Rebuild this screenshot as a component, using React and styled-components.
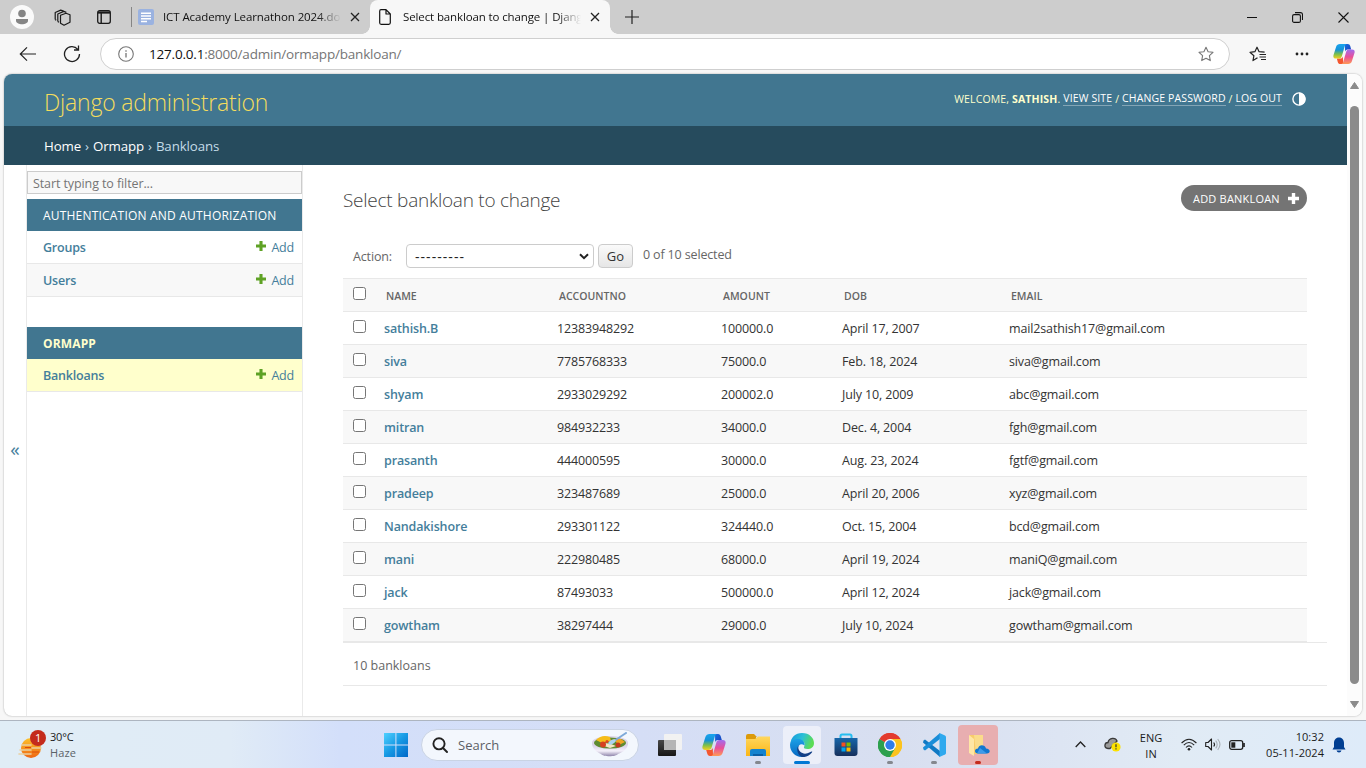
import React from "react";
import styled, { createGlobalStyle, css } from "styled-components";

const GlobalStyle = createGlobalStyle`
  * { box-sizing: border-box; }
  html, body { margin: 0; padding: 0; overflow: hidden; }
  body {
    width: 1366px;
    height: 768px;
    background: #f7f7f7;
    font-family: "Open Sans", "Noto Sans", sans-serif;
    font-size: 12.5px;
    color: #333;
    white-space: nowrap;
  }
  svg { display: block; flex: none; }
`;

const Screen = styled.div`
  width: 1366px;
  height: 768px;
  display: flex;
  flex-direction: column;
`;

/* ---------- browser chrome ---------- */
const TabStrip = styled.div`
  height: 34px;
  flex: none;
  display: flex;
  align-items: center;
  background: #cdcdcd;
  color: #111;
`;
const Avatar = styled.div`
  width: 24px;
  height: 24px;
  margin-left: 10px;
  border-radius: 50%;
  background: #fafafa;
`;
const StripIcon = styled.div`
  margin-left: ${(p) => p.$gap}px;
`;
const StripDivider = styled.div`
  width: 1px;
  height: 20px;
  margin-left: 20px;
  background: #858585;
`;
const Tab = styled.div`
  position: relative;
  display: flex;
  align-items: center;
  height: 34px;
  width: ${(p) => p.$width}px;
  padding-left: ${(p) => p.$pad}px;
  ${(p) =>
    p.$active &&
    css`
      background: #f7f7f7;
      border-radius: 8px 8px 0 0;
      &::before,
      &::after {
        content: "";
        position: absolute;
        bottom: 0;
        width: 8px;
        height: 8px;
      }
      &::before {
        left: -8px;
        background: radial-gradient(circle at 0 0, #cdcdcd 7.5px, #f7f7f7 8px);
      }
      &::after {
        right: -8px;
        background: radial-gradient(circle at 100% 0, #cdcdcd 7.5px, #f7f7f7 8px);
      }
    `}
`;
const TabTitle = styled.div`
  width: ${(p) => p.$width}px;
  margin: 0 9px 0 ${(p) => p.$gap}px;
  overflow: hidden;
  font-size: 11.5px;
  letter-spacing: ${(p) => p.$ls}px;
  line-height: 18px;
  mask-image: linear-gradient(90deg, #000 calc(100% - 24px), transparent);
`;
const WindowButtons = styled.div`
  margin-left: auto;
  margin-right: 17px;
  display: flex;
  align-items: center;
  gap: 35px;
`;
const Toolbar = styled.div`
  height: 40px;
  flex: none;
  display: flex;
  align-items: center;
  padding-left: 19px;
`;
const AddressBar = styled.div`
  width: 1130px;
  height: 32px;
  margin-left: 19px;
  padding: 0 15px 0 17px;
  display: flex;
  align-items: center;
  background: #fff;
  border: 1px solid #cfcfcf;
  border-radius: 16px;
`;
const Url = styled.div`
  flex: 1;
  margin-left: 15px;
  font-size: 13.5px;
  letter-spacing: -0.2px;
  color: #757575;
  span { color: #111; }
`;
const ToolbarActions = styled.div`
  display: flex;
  align-items: center;
  margin-left: 19px;
  gap: 28px;
`;

/* ---------- page ---------- */
const PageFrame = styled.div`
  width: 1358px;
  height: 642px;
  flex: none;
  margin: 0 4px 4px;
  display: flex;
  background: #fff;
  border-radius: 8px;
  overflow: hidden;
  box-shadow: 0 0 2px rgba(0, 0, 0, 0.35);
`;
const Site = styled.div`
  width: 1343px;
  display: flex;
  flex-direction: column;
`;
const Scrollbar = styled.div`
  width: 15px;
  display: flex;
  flex-direction: column;
  align-items: center;
  justify-content: space-between;
  padding: 8px 0 8px;
  background: #fcfcfc;
`;
const Thumb = styled.div`
  width: 9px;
  height: 578px;
  border-radius: 5px;
  background: #8b8b8b;
`;
const Header = styled.header`
  height: 52px;
  flex: none;
  display: flex;
  align-items: center;
  justify-content: space-between;
  padding: 3px 41px 0 40px;
  background: #417690;
`;
const Branding = styled.h1`
  margin: 0;
  font-size: 23px;
  font-weight: 300;
  letter-spacing: -0.2px;
  color: #f5dd5d;
`;
const UserTools = styled.div`
  display: flex;
  align-items: center;
  height: 18px;
  margin-top: -6px;
  font-size: 10.5px;
  letter-spacing: 0.14px;
  line-height: 14px;
  color: #ffc;
  white-space: pre;
  b { font-weight: 700; }
  a { color: #fff; border-bottom: 1px solid rgba(255, 255, 255, 0.35); }
  svg { margin-left: 10px; }
`;
const Breadcrumbs = styled.nav`
  height: 39px;
  flex: none;
  display: flex;
  align-items: center;
  gap: 4px;
  padding-left: 40px;
  background: #264b5d;
  color: #c4dce8;
  font-size: 13.3px;
  letter-spacing: -0.12px;
  a { color: #fff; font-weight: 500; }
`;
const Main = styled.div`
  flex: 1;
  min-height: 0;
  display: flex;
`;
const SidebarToggle = styled.div`
  width: 23px;
  border-right: 1px solid #eaeaea;
  padding-top: 271px;
  text-align: center;
  font-size: 19px;
  line-height: 26px;
  color: #447e9b;
`;
const Sidebar = styled.aside`
  width: 276px;
  border-right: 1px solid #eaeaea;
  padding-top: 6px;
`;
const FilterInput = styled.input`
  display: block;
  width: 275px;
  height: 23px;
  margin: 0 0 5px;
  padding: 1px 5px 0;
  border: 1px solid #ccc;
  background: #f8f8f8;
  font: inherit;
  font-size: 12.5px;
  letter-spacing: -0.1px;
  &::placeholder { color: #757575; }
`;
const Module = styled.section`
  margin-bottom: 30px;
`;
const ModuleCaption = styled.h2`
  height: 32px;
  margin: 0;
  padding-left: 16px;
  display: flex;
  align-items: center;
  background: #417690;
  color: ${(p) => (p.$current ? "#ffc" : "#fff")};
  font-size: 12px;
  font-weight: ${(p) => (p.$current ? 700 : 500)};
  letter-spacing: ${(p) => (p.$current ? 0.15 : 0.2)}px;
`;
const ModelRow = styled.div`
  height: 33px;
  display: flex;
  align-items: center;
  padding: 0 8px 0 16px;
  border-bottom: 1px solid #e8e8e8;
  background: ${(p) => (p.$current ? "#ffc" : p.$shade ? "#f8f8f8" : "#fff")};
  color: #447e9b;
  letter-spacing: -0.2px;
  b { flex: 1; font-weight: 600; }
  svg { margin: -3px 5px 0 0; }
`;

const Content = styled.main`
  flex: 1;
  padding: 20px 20px 0 40px;
`;
const TitleRow = styled.div`
  height: 30px;
  display: flex;
  justify-content: space-between;
  margin-right: 20px;
`;
const Title = styled.h1`
  margin: 0;
  font-size: 19px;
  font-weight: 300;
  line-height: 30px;
  letter-spacing: -0.25px;
  color: #444;
`;
const AddButton = styled.a`
  width: 126px;
  height: 26px;
  padding: 0 8px 0 12px;
  display: flex;
  align-items: center;
  justify-content: space-between;
  border-radius: 13px;
  background: #747474;
  color: #fff;
  font-size: 11px;
  font-weight: 500;
  letter-spacing: 0.2px;
`;
const Actions = styled.div`
  height: 63px;
  display: flex;
  align-items: center;
  padding: 19px 0 0 10px;
  color: #666;
  letter-spacing: -0.15px;
  label { width: 53px; }
`;
const SelectBox = styled.div`
  width: 188px;
  height: 24px;
  padding: 0 4px 0 8px;
  display: flex;
  align-items: center;
  justify-content: space-between;
  border: 1px solid #ccc;
  border-radius: 4px;
  color: #222;
  font-size: 14px;
  letter-spacing: 1.05px;
`;
const GoButton = styled.button`
  width: 35px;
  height: 24px;
  margin: 0 10px 0 4px;
  padding: 0;
  border: 1px solid #ccc;
  border-radius: 4px;
  background: linear-gradient(#fafafa, #e6e6e6);
  color: #333;
  font: inherit;
  font-size: 13px;
`;
const Counter = styled.span`
  margin-top: -4px;
`;
const ResultTable = styled.table`
  width: 964px;
  table-layout: fixed;
  border-collapse: separate;
  border-spacing: 0;
  border-top: 1px solid #e8e8e8;
`;
const Th = styled.th`
  height: 33px;
  padding: 1px 0 0 ${(p) => (p.$check ? 10 : 2)}px;
  background: #f8f8f8;
  border-bottom: 1px solid #e8e8e8;
  text-align: left;
  font-size: 10.5px;
  font-weight: 600;
  letter-spacing: 0;
  color: #666;
`;
const Tr = styled.tr`
  background: ${(p) => (p.$shade ? "#f8f8f8" : "#fff")};
`;
const Td = styled.td`
  height: 33px;
  padding: 1px 0 0 ${(p) => (p.$check ? 10 : 0)}px;
  border-bottom: 1px solid #e8e8e8;
  letter-spacing: ${(p) => p.$ls ?? -0.14}px;
  ${(p) => p.$link && css`color: #447e9b; font-weight: 600;`}
`;
const Check = styled.input.attrs({ type: "checkbox" })`
  display: block;
  width: 13px;
  height: 13px;
  margin: -4px 0 0;
`;
const Paginator = styled.div`
  height: 44px;
  padding: 2px 0 0 10px;
  display: flex;
  align-items: center;
  border-top: 1px solid #e8e8e8;
  border-bottom: 1px solid #e8e8e8;
  color: #666;
`;

/* ---------- taskbar ---------- */
const Taskbar = styled.footer`
  height: 48px;
  flex: none;
  display: flex;
  align-items: center;
  border-top: 1px solid #adb5c0;
  background: linear-gradient(90deg, #e0edf6 0, #e0ebf6 230px, #d3dffa 340px, #d5def6 640px, #d8dff0 900px, #dde5f3 1060px, #e1ebf5 1180px, #deebf9 1366px);
  color: #1b1b1b;
`;
const Weather = styled.div`
  width: 363px;
  padding-left: 18px;
  display: flex;
  align-items: center;
  font-size: 11px;
  line-height: 16px;
  letter-spacing: -0.2px;
`;
const WeatherText = styled.div`
  margin-left: 4px;
  div + div { color: #5b6268; letter-spacing: 0.15px; }
`;
const SearchBox = styled.div`
  width: 218px;
  height: 32px;
  margin: 0 12px 0 13px;
  padding: 0 9px 0 10px;
  display: flex;
  align-items: center;
  border-radius: 16px;
  border: 1px solid #c9d3e4;
  background: #f3f7fd;
  font-size: 13px;
  color: #5c5f66;
  span { flex: 1; margin-left: 10px; }
`;
const AppSlot = styled.div`
  position: relative;
  width: ${(p) => (p.$tone === "alert" ? 40 : 38)}px;
  height: ${(p) => (p.$tone === "alert" ? 40 : 38)}px;
  margin-right: ${(p) => (p.$tone === "alert" ? 0 : p.$gap ?? 6)}px;
  display: flex;
  align-items: center;
  justify-content: center;
  border-radius: 4px;
  background: ${(p) => (p.$tone === "active" ? "#eceff9" : p.$tone === "alert" ? "#e8aeb0" : "transparent")};
  &::after {
    content: "";
    position: absolute;
    bottom: ${(p) => (p.$tone === "alert" ? 1 : 0)}px;
    width: ${(p) => (p.$tone === "active" ? 16 : 6)}px;
    height: 3px;
    border-radius: 2px;
    background: ${(p) => (p.$tone === "active" ? "#0078d4" : p.$tone === "alert" ? "#c42b1c" : p.$tone === "open" ? "#84878e" : "transparent")};
  }
`;
const Tray = styled.div`
  margin-left: auto;
  margin-right: 20px;
  display: flex;
  align-items: center;
  font-size: 11px;
  line-height: 16px;
`;
const Language = styled.div`
  width: 30px;
  margin: 3px 15px 0 15px;
  text-align: center;
`;
const Clock = styled.div`
  width: 66px;
  margin: 0 8px 0 13px;
  text-align: right;
  letter-spacing: ${(p) => p.$ls ?? 0.05}px;
`;
const TraySpacer = styled.div`
  width: ${(p) => p.$w}px;
`;

/* ---------- icons ---------- */
const Svg = ({ w = 16, h = w, box, children, ...rest }) => (
  <svg width={w} height={h} viewBox={box || `0 0 ${w} ${h}`} fill="none" {...rest}>
    {children}
  </svg>
);
const Close = () => (
  <Svg w={10} stroke="#222" strokeWidth="1.3"><path d="M1 1l8 8M9 1l-8 8" /></Svg>
);
const Plus = ({ size, color }) => (
  <Svg w={size} box="0 0 11 11" fill={color}><path d="M3.8 0h3.4v3.8H11v3.4H7.2V11H3.8V7.2H0V3.8h3.8z" fill={color} /></Svg>
);
const Star = (
  "M8 1.2l2.1 4.5 4.9.6-3.6 3.4.9 4.9L8 12.2l-4.3 2.4.9-4.9L1 6.3l4.9-.6z"
);
const Copilot = ({ size, id }) => (
  <Svg w={size} box="0 0 24 24">
    <defs>
      <linearGradient id={`${id}a`} x1="0" y1="0" x2="0" y2="1">
        <stop offset="0" stopColor="#1aa4ee" /><stop offset=".4" stopColor="#1593d8" /><stop offset=".7" stopColor="#7cbf4a" /><stop offset="1" stopColor="#f5d020" />
      </linearGradient>
      <linearGradient id={`${id}b`} x1="0" y1="0" x2="0" y2="1">
        <stop offset="0" stopColor="#a06cf0" /><stop offset=".5" stopColor="#e84f9a" /><stop offset="1" stopColor="#ff9a55" />
      </linearGradient>
      <linearGradient id={`${id}c`} x1="0" y1="0" x2="1" y2="1">
        <stop offset="0" stopColor="#1b6fe0" /><stop offset="1" stopColor="#153fbd" />
      </linearGradient>
    </defs>
    <path d="M13 1h3c1.6 0 2.3.9 2.8 2.4L19.800 7H16c-1.500 0-2.300.8-2.800 2.300z" fill={`url(#${id}c)`} />
    <path d="M11 23H8c-1.600 0-2.300-.9-2.800-2.400L4.200 17H8c1.500 0 2.300-.8 2.800-2.300z" fill="#f4572f" />
    <path d="M7.500 1H15c-1.200 0-1.800 1-2.300 2.700L9.800 14c-.6 2.200-1.500 3-3.300 3H3.200C.8 17-.1 15.500.6 13L3.400 4C4.100 1.900 5.500 1 7.500 1z" fill={`url(#${id}a)`} />
    <path d="M16.500 23H9c1.200 0 1.800-1 2.300-2.700L14.200 10c.6-2.200 1.500-3 3.300-3h3.300c2.400 0 3.300 1.500 2.600 4l-2.800 9c-.7 2.100-2.100 3-4.100 3z" fill={`url(#${id}b)`} />
  </Svg>
);

const WeatherIcon = () => (
  <Svg w={28} h={30}>
    <defs><linearGradient id="sun" x1="0" y1="0" x2="0" y2="1"><stop offset="0" stopColor="#fdc22b" /><stop offset="1" stopColor="#ee6612" /></linearGradient></defs>
    <circle cx="13" cy="18" r="10" fill="url(#sun)" />
    <path d="M4 15h9M14 18h9M2 20h11M1 24h12" stroke="#e9cfa0" strokeWidth="1.6" strokeLinecap="round" />
    <path d="M7 17.500h6M14 22h7" stroke="#d94c0a" strokeWidth="1" />
    <circle cx="20" cy="8" r="8" fill="#c42b1c" />
    <text x="20" y="12" textAnchor="middle" fontSize="11" fill="#fff" fontFamily="Open Sans, sans-serif">1</text>
  </Svg>
);
const WindowsLogo = () => (
  <Svg w={24}>
    <defs><linearGradient id="win" x1="0" y1="0" x2="1" y2="1"><stop offset="0" stopColor="#4fd0ff" /><stop offset=".5" stopColor="#1699e4" /><stop offset="1" stopColor="#0067c8" /></linearGradient></defs>
    <path d="M0 0h11.400v11.400H0zM12.400 0H24v11.400H12.400zM0 12.400h11.400V24H0zM12.400 12.400H24V24H12.400z" fill="url(#win)" />
  </Svg>
);
const Soup = () => (
  <Svg w={38} h={26}>
    <defs><linearGradient id="bowl" x1="0" y1="0" x2="0" y2="1"><stop offset="0" stopColor="#cfc4df" /><stop offset=".6" stopColor="#f4f0fa" /><stop offset="1" stopColor="#8e84aa" /></linearGradient></defs>
    <path d="M1 11c0 6 5 9 9 11 2 3 15 3 17 0 5-2 10-5 10-11z" fill="url(#bowl)" />
    <ellipse cx="19" cy="10.500" rx="18" ry="6.500" fill="#ddd5e8" />
    <ellipse cx="19" cy="11" rx="16" ry="5.500" fill="#5f8b31" />
    <path d="M5 8q6-6 14-3l1 4-9 2z" fill="#f6bd18" />
    <path d="M22 7l8 0 4 3-6 3z" fill="#f0a423" />
    <path d="M14 11l6 1 5 2-6 2-6-2z" fill="#f4e4c3" />
    <circle cx="12" cy="12.500" r="3" fill="#d6401f" /><circle cx="27" cy="13" r="2.500" fill="#c33a1f" /><circle cx="16" cy="9.500" r="1.600" fill="#e2451e" />
    <path d="M35 1L23 9" stroke="#7ea9d8" strokeWidth="2" strokeLinecap="round" />
    <ellipse cx="21" cy="10" rx="4" ry="2" transform="rotate(-30 21 10)" fill="#acd2f0" />
  </Svg>
);
const TaskView = () => (
  <Svg w={24} h={22}>
    <defs><linearGradient id="tv" x1="0" y1="0" x2="0" y2="1"><stop offset="0" stopColor="#484848" /><stop offset="1" stopColor="#171717" /></linearGradient></defs>
    <rect x="0" y="6" width="18" height="16" rx="1" fill="url(#tv)" />
    <rect x="6" y="0" width="18" height="16" rx="1" fill="#f2f2f2" />
    <rect x="6" y="6" width="12" height="10" fill="#b5b5b5" />
  </Svg>
);
const Explorer = () => (
  <Svg w={24} h={22}>
    <defs><linearGradient id="fold" x1="0" y1="0" x2="0" y2="1"><stop offset="0" stopColor="#ffd75e" /><stop offset="1" stopColor="#fbb616" /></linearGradient></defs>
    <path d="M0 2q0-2 2-2h6l3 3h-1v5H0z" fill="#dc9a0a" />
    <path d="M0 5h9l3-2.500h12V22H0z" fill="url(#fold)" />
    <path d="M4 22v-5q0-2 2-2h12q2 0 2 2v5z" fill="#1483cf" /><path d="M7 22v-2h10v2z" fill="#0b5fa5" />
  </Svg>
);
const Edge = () => (
  <Svg w={24}>
    <defs>
      <linearGradient id="eg1" x1="0" y1="0" x2="1" y2=".3"><stop offset="0" stopColor="#1497df" /><stop offset=".55" stopColor="#2cc0d6" /><stop offset="1" stopColor="#5bdc55" /></linearGradient>
      <linearGradient id="eg2" x1="0" y1="0" x2="0" y2="1"><stop offset="0" stopColor="#1ba0e6" /><stop offset="1" stopColor="#0867c0" /></linearGradient>
    </defs>
    <path d="M.5 11C.5 4.500 5.500 0 12 0c7.500 0 12 5 12 10 0 4-3 6-6.500 6-2.800 0-4-1-3.500-2 1.500-2.500.5-6.500-4-6.500-5 0-9 1.500-9.500 3.500z" fill="url(#eg1)" />
    <path d="M.1 11C1 7 5 5.500 9 6c4 .5 6 3.500 5.500 6.500C11 9.500 8 12.500 8 15.500c0 4 3 7 5.500 8.500C6 24.500-.6 19 .1 11z" fill="url(#eg2)" />
    <path d="M8.500 12.500c-1.500 5.500 4 9.500 9 7.700 2-.7 3.500-2 4.500-1.700.7.200 0 1-.5 1.500C19 23 15 24.500 12 24c-4-2-6.500-7.500-3.500-11.500z" fill="#123f86" />
  </Svg>
);
const Store = () => (
  <Svg w={24}>
    <defs><linearGradient id="store" x1="0" y1="0" x2="0" y2="1"><stop offset="0" stopColor="#1766aa" /><stop offset="1" stopColor="#16305c" /></linearGradient></defs>
    <path d="M6.500 6V3q0-1.500 1.500-1.500h8q1.500 0 1.500 1.500v3" stroke="#25bdf0" strokeWidth="2" />
    <path d="M.5 5h23v15q0 3-3 3h-17q-3 0-3-3z" fill="url(#store)" />
    <path d="M7.500 9.500h4v4h-4z" fill="#f25022" /><path d="M12.500 9.500h4v4h-4z" fill="#7fba00" /><path d="M7.500 14.500h4v4h-4z" fill="#00a4ef" /><path d="M12.500 14.500h4v4h-4z" fill="#ffb900" />
  </Svg>
);
const Chrome = () => (
  <Svg w={24}>
    <path d="M12 12L1.600 6A12 12 0 0 1 22.400 6z" fill="#e33b2e" />
    <path d="M12 12L22.400 6A12 12 0 0 1 12 24z" fill="#fcc31e" />
    <path d="M12 12v12A12 12 0 0 1 1.600 6z" fill="#2da04e" />
    <path d="M12 6h10.400A12 12 0 0 1 12 24l5.200-9z" fill="#fcc31e" />
    <path d="M17.200 15L12 24A12 12 0 0 1 1.600 6l5.200 9z" fill="#2da04e" />
    <path d="M1.600 6A12 12 0 0 1 22.400 6H12L6.800 9z" fill="#e33b2e" />
    <circle cx="12" cy="12" r="6" fill="#fff" /><circle cx="12" cy="12" r="4.700" fill="#2f7de9" />
  </Svg>
);
const VSCode = () => (
  <Svg w={24}>
    <path d="M1.500 7.500L3 6.400 18 18v6L1 9.500z" fill="#1079c4" />
    <path d="M1.500 16.500L3 17.600 18 6V0L1 14.500z" fill="#1a8dd8" />
    <path d="M17.500 0L23 2.500q1 .5 1 1.500v16q0 1-1 1.500L17.500 24z" fill="#2fa9ee" />
  </Svg>
);
const CloudFolder = () => (
  <Svg w={24} h={22}>
    <path d="M3 1h11v19H6l-3-2z" fill="#f8cc6b" /><path d="M8 1h9v18H10z" fill="#fbdc8b" />
    <path d="M3 1l5 4v17l-5-3z" fill="#ffe6a5" />
    <path d="M12 19.500c-4 0-4-5 0-5 1-4.500 7-4 8 0 4.500 0 5 5 1 5z" fill="#1377d0" /><path d="M14 14l7 5.500H11z" fill="#3f9bea" />
  </Svg>
);
const Bell = () => (
  <Svg w={14} h={16}><path d="M7 .5C3.700.500 2 3 2 6v4L.5 12.500h13L12 10V6C12 3 10.300.500 7 .500z" fill="#003e92" /><path d="M4.500 13.500h5q-.5 2-2.500 2t-2.500-2z" fill="#003e92" /></Svg>
);

/* ---------- data ---------- */
const rows = [
  ["sathish.B", "12383948292", "100000.0", "April 17, 2007", "mail2sathish17@gmail.com"],
  ["siva", "7785768333", "75000.0", "Feb. 18, 2024", "siva@gmail.com"],
  ["shyam", "2933029292", "200002.0", "July 10, 2009", "abc@gmail.com"],
  ["mitran", "984932233", "34000.0", "Dec. 4, 2004", "fgh@gmail.com"],
  ["prasanth", "444000595", "30000.0", "Aug. 23, 2024", "fgtf@gmail.com"],
  ["pradeep", "323487689", "25000.0", "April 20, 2006", "xyz@gmail.com"],
  ["Nandakishore", "293301122", "324440.0", "Oct. 15, 2004", "bcd@gmail.com"],
  ["mani", "222980485", "68000.0", "April 19, 2024", "maniQ@gmail.com"],
  ["jack", "87493033", "500000.0", "April 12, 2024", "jack@gmail.com"],
  ["gowtham", "38297444", "29000.0", "July 10, 2024", "gowtham@gmail.com"],
];
const modules = [
  { caption: "AUTHENTICATION AND AUTHORIZATION", models: ["Groups", "Users"] },
  { caption: "ORMAPP", current: true, models: ["Bankloans"] },
];

const BrowserTabs = () => (
  <TabStrip>
    <Avatar>
      <Svg w={24} fill="#858585"><circle cx="12" cy="8.500" r="3.800" fill="#858585" /><path d="M6 14h12v1.500c0 5-12 5-12 0z" fill="#858585" /></Svg>
    </Avatar>
    <StripIcon $gap={20}>
      <Svg w={17} stroke="#1a1a1a" strokeWidth="1.2" strokeLinejoin="round">
        <path d="M6.500 6.200l5.500-2 4 1.500v7.500l-6 3-3.500-2z" /><path d="M6.500 6.200l3.700 2v7.800M10.200 8.200L16 5.800" stroke="none" />
        <path d="M3.800 12.500V5l6-2.600 2.500 1M1.200 10.500V3.500l5.500-2.400 3 1" /><path d="M1.200 10.500l1 .8M3.800 12.500l1.200.8" />
      </Svg>
    </StripIcon>
    <StripIcon $gap={26}>
      <Svg w={14} stroke="#1a1a1a" strokeWidth="1.300"><rect x=".7" y=".7" width="12.600" height="12.600" rx="2" /><path d="M1 2.500h12M4.200 3v10" strokeWidth="1.400" /><path d="M1 1.500h12v2H1z" fill="#1a1a1a" stroke="none" /></Svg>
    </StripIcon>
    <StripDivider />
    <Tab $width={238} $pad={6}>
      <Svg w={16}><rect width="16" height="16" rx="2" fill="#9ab2e0" /><path d="M3 4.200h10M3 7h10M3 9.800h10M3 12.500h6" stroke="#fff" strokeWidth="1.500" /></Svg>
      <TabTitle $width={178} $gap={9} $ls={-0.1}>ICT Academy Learnathon 2024.docx</TabTitle>
      <Close />
    </Tab>
    <Tab $active $width={240} $pad={9}>
      <Svg w={12} h={16} stroke="#111" strokeWidth="1.200" strokeLinejoin="round"><path d="M2 .7h5l4.300 4.300v8.800q0 1.500-1.500 1.500H2.200Q.7 15.300.7 13.800V2.200Q.7.700 2 .700zM7 .700V5h4.300" /></Svg>
      <TabTitle $width={178} $gap={12} $ls={-0.12}>Select bankloan to change | Django site admin</TabTitle>
      <Close />
    </Tab>
    <StripIcon $gap={15}><Svg w={14} stroke="#222" strokeWidth="1.200"><path d="M7 0v14M0 7h14" /></Svg></StripIcon>
    <WindowButtons>
      <Svg w={10} stroke="#111"><path d="M0 5.500h10" /></Svg>
      <Svg w={11} stroke="#111" strokeWidth="1.100"><rect x=".6" y="2.600" width="7.800" height="7.800" rx="1.500" /><path d="M3 .6h5.500q2 0 2 2V8" /></Svg>
      <Svg w={11} stroke="#111" strokeWidth="1.100"><path d="M.5.500l10 10M10.500.500l-10 10" /></Svg>
    </WindowButtons>
  </TabStrip>
);

const BrowserToolbar = () => (
  <Toolbar>
    <Svg w={18} h={16} stroke="#222" strokeWidth="1.200"><path d="M17 8H1.500M8 1.300L1.300 8 8 14.700" /></Svg>
    <StripIcon $gap={26}>
      <Svg w={18} stroke="#222" strokeWidth="1.300"><path d="M16.500 9A7.500 7.500 0 1 1 14.800 4.300M15.500.500V5h-4.500" /></Svg>
    </StripIcon>
    <AddressBar>
      <Svg w={16} stroke="#767676" strokeWidth="1.100"><circle cx="8" cy="8" r="7.300" /><path d="M8 7v4.500M8 4.200v1.500" strokeWidth="1.300" /></Svg>
      <Url><span>127.0.0.1</span>:8000/admin/ormapp/bankloan/</Url>
      <Svg w={16} stroke="#767676" strokeWidth="1.100" strokeLinejoin="round"><path d={Star} /></Svg>
    </AddressBar>
    <ToolbarActions>
      <Svg w={18} h={16} stroke="#222" strokeWidth="1.200" strokeLinejoin="round"><path d="M8.500 11.800L4 14.600l.9-4.900L1 6.300l4.900-.6L8 1.200l2.100 4.500 5.500.5M10.500 8.500H17M10.500 11h6.500M12 13.500h5" /></Svg>
      <Svg w={14} h={4} fill="#222"><circle cx="2" cy="2" r="1.400" fill="#222" /><circle cx="7" cy="2" r="1.400" fill="#222" /><circle cx="12" cy="2" r="1.400" fill="#222" /></Svg>
      <TraySpacer $w={0}><Svg w={0} /></TraySpacer>
    </ToolbarActions>
    <StripIcon $gap={-4}><Copilot size={22} id="tb" /></StripIcon>
  </Toolbar>
);

const AdminSidebar = () => (
  <Sidebar>
    <FilterInput placeholder="Start typing to filter..." />
    {modules.map((m) => (
      <Module key={m.caption}>
        <ModuleCaption $current={m.current}>{m.caption}</ModuleCaption>
        {m.models.map((name, i) => (
          <ModelRow key={name} $shade={i % 2 === 1} $current={m.current}>
            <b>{name}</b>
            <Plus size={10} color="#5fa225" />
            Add
          </ModelRow>
        ))}
      </Module>
    ))}
  </Sidebar>
);

const Changelist = () => (
  <Content>
    <TitleRow>
      <Title>Select bankloan to change</Title>
      <AddButton>ADD BANKLOAN<Plus size={11} color="#fff" /></AddButton>
    </TitleRow>
    <Actions>
      <label>Action:</label>
      <SelectBox>---------<Svg w={10} h={7} stroke="#222" strokeWidth="2"><path d="M1 1.200l4 4 4-4" /></Svg></SelectBox>
      <GoButton>Go</GoButton>
      <Counter>0 of 10 selected</Counter>
    </Actions>
    <ResultTable>
      <colgroup>
        <col width="41" /><col width="173" /><col width="164" /><col width="121" /><col width="167" /><col />
      </colgroup>
      <thead>
        <tr>
          <Th $check><Check /></Th>
          {["NAME", "ACCOUNTNO", "AMOUNT", "DOB", "EMAIL"].map((h) => <Th key={h}>{h}</Th>)}
        </tr>
      </thead>
      <tbody>
        {rows.map((r, i) => (
          <Tr key={r[0]} $shade={i % 2 === 1}>
            <Td $check><Check /></Td>
            {r.map((c, j) => <Td key={j} $link={j === 0}>{c}</Td>)}
          </Tr>
        ))}
      </tbody>
    </ResultTable>
    <Paginator>10 bankloans</Paginator>
  </Content>
);

const DesktopTaskbar = () => (
  <Taskbar>
    <Weather>
      <WeatherIcon />
      <WeatherText><div>30°C</div><div>Haze</div></WeatherText>
    </Weather>
    <TraySpacer $w={21} />
    <WindowsLogo />
    <SearchBox>
      <Svg w={16} stroke="#222" strokeWidth="1.900"><circle cx="7" cy="6.800" r="5.600" /><path d="M11 11l4 4" strokeLinecap="round" /></Svg>
      <span>Search</span>
      <Soup />
    </SearchBox>
    <TraySpacer $w={-6} />
    <AppSlot $gap={6}><TaskView /></AppSlot>
    <AppSlot><Copilot size={24} id="task" /></AppSlot>
    <AppSlot $tone="open"><Explorer /></AppSlot>
    <AppSlot $tone="active"><Edge /></AppSlot>
    <AppSlot><Store /></AppSlot>
    <AppSlot $tone="open"><Chrome /></AppSlot>
    <AppSlot $tone="open" $gap={5}><VSCode /></AppSlot>
    <AppSlot $tone="alert"><CloudFolder /></AppSlot>
    <Tray>
      <Svg w={11} h={7} stroke="#222" strokeWidth="1.300"><path d="M.7 6l4.800-5 4.800 5" /></Svg>
      <TraySpacer $w={18} />
      <Svg w={17} h={15}>
        <path d="M4 11.500C-.5 11 .3 5.500 4 5.500 5 .5 11.500 0 13 4L6 11.500z" fill="#9a9a9a" stroke="#3a3a3a" strokeWidth="1.300" />
        <circle cx="12" cy="10" r="4.600" fill="#fce100" /><path d="M12 7.300v3M12 11.300v1.300" stroke="#333" strokeWidth="1.200" />
      </Svg>
      <Language>ENG<br />IN</Language>
      <Svg w={16} h={13} stroke="#222" strokeWidth="1.100"><path d="M.6 5q7.400-7.500 14.800 0M2.800 7.200q5.200-5.300 10.400 0M5 9.500q3-3.300 6 0" /><circle cx="8" cy="11.200" r="1.300" fill="#222" stroke="none" /></Svg>
      <TraySpacer $w={8} />
      <Svg w={16} h={13} stroke="#222" strokeWidth="1.100"><path d="M.7 4.500H3L6.500 1v11L3 8.500H.700z" strokeLinejoin="round" /><path d="M8.700 4.500q1.700 2 0 4" /><path d="M10.700 2.700q3 3.800 0 7.600M12.700 1q4.500 5.500 0 11" stroke="#aab0b6" /></Svg>
      <TraySpacer $w={8} />
      <Svg w={16} h={10}><rect x=".7" y=".7" width="13" height="8.600" rx="2" stroke="#222" strokeWidth="1.300" /><rect x="2.300" y="2.300" width="4" height="5.400" fill="#222" /><path d="M15 3v4" stroke="#222" strokeWidth="1.700" /></Svg>
      <Clock>10:32<br />05-11-2024</Clock>
      <Bell />
    </Tray>
  </Taskbar>
);

export default function App() {
  return (
    <>
      <GlobalStyle />
      <Screen>
        <BrowserTabs />
        <BrowserToolbar />
        <PageFrame>
          <Site>
            <Header>
              <Branding>Django administration</Branding>
              <UserTools>
                WELCOME, <b>SATHISH</b>. <a>VIEW SITE</a> / <a>CHANGE PASSWORD</a> / <a>LOG OUT</a>
                <Svg w={14}><circle cx="7" cy="7" r="6.100" stroke="#fff" strokeWidth="1.400" /><path d="M7 .5a6.500 6.500 0 0 1 0 13z" fill="#fff" /></Svg>
              </UserTools>
            </Header>
            <Breadcrumbs><a>Home</a>›<a>Ormapp</a>›<span>Bankloans</span></Breadcrumbs>
            <Main>
              <SidebarToggle>«</SidebarToggle>
              <AdminSidebar />
              <Changelist />
            </Main>
          </Site>
          <Scrollbar>
            <Svg w={9} h={7}><path d="M4.500.500L8.500 6.500h-8z" fill="#8b8b8b" stroke="#8b8b8b" strokeLinejoin="round" /></Svg>
            <Thumb />
            <Svg w={9} h={7}><path d="M4.500 6.500L8.500.500h-8z" fill="#8b8b8b" stroke="#8b8b8b" strokeLinejoin="round" /></Svg>
          </Scrollbar>
        </PageFrame>
        <Taskbar as={React.Fragment}></Taskbar>
        <DesktopTaskbar />
      </Screen>
    </>
  );
}
